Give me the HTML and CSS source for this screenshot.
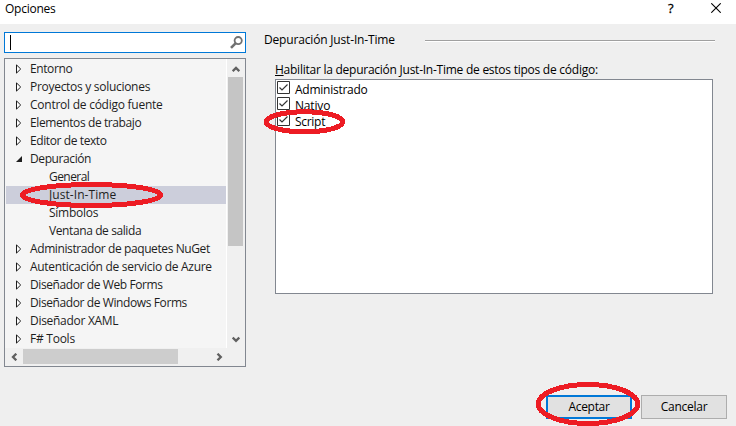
FILE: index.html
```html
<!DOCTYPE html>
<html lang="es">
<head>
<meta charset="utf-8">
<title>Opciones</title>
<link rel="stylesheet" href="styles.css">
</head>
<body>
<svg width="0" height="0" class="defs"><defs>
  <symbol id="closed" viewBox="0 0 6 10"><path d="M.5 .9V9.1L4.7 5Z" fill="#fff" stroke="#1e1e1e"/></symbol>
  <symbol id="open" viewBox="0 0 6 10"><path d="M6 2V8H0Z" fill="#1e1e1e"/></symbol>
</defs></svg>
<div class="dialog">
  <header class="titlebar">
    <span class="title s25">Opciones</span>
    <span class="help">?</span>
    <svg class="close" width="10" height="10" viewBox="0 0 10 10"><path d="M.3 .3 9.7 9.7M9.7 .3 .3 9.7" stroke="#000" stroke-width="1.1"/></svg>
  </header>
  <div class="content">
    <aside class="side">
      <div class="search">
        <i class="caret"></i>
        <svg width="13" height="13" viewBox="0 0 13 13" fill="none" stroke="#717171"><circle cx="8.2" cy="4.6" r="3.6" stroke-width="1.8"/><path d="M5.5 7.3 1 11.8" stroke-width="2.6"/></svg>
      </div>
      <div class="tree">
        <ul class="nodes">
          <li class="node"><svg class="arrow"><use href="#closed"/></svg><span class="s40">Entorno</span></li>
          <li class="node"><svg class="arrow"><use href="#closed"/></svg><span class="s30">Proyectos y soluciones</span></li>
          <li class="node"><svg class="arrow"><use href="#closed"/></svg><span class="s25">Control de código fuente</span></li>
          <li class="node"><svg class="arrow"><use href="#closed"/></svg><span class="s40">Elementos de trabajo</span></li>
          <li class="node"><svg class="arrow"><use href="#closed"/></svg><span class="s40">Editor de texto</span></li>
          <li class="node"><svg class="arrow"><use href="#open"/></svg><span class="s40">Depuración</span></li>
          <li class="node leaf"><span class="s55">General</span></li>
          <li class="node leaf selected"><span class="wide">Just-In-Time</span></li>
          <li class="node leaf"><span class="s25">Símbolos</span></li>
          <li class="node leaf"><span class="s40">Ventana de salida</span></li>
          <li class="node"><svg class="arrow"><use href="#closed"/></svg><span class="s40">Administrador de paquetes NuGet</span></li>
          <li class="node"><svg class="arrow"><use href="#closed"/></svg><span class="s30">Autenticación de servicio de Azure</span></li>
          <li class="node"><svg class="arrow"><use href="#closed"/></svg><span class="s40">Diseñador de Web Forms</span></li>
          <li class="node"><svg class="arrow"><use href="#closed"/></svg><span class="s40">Diseñador de Windows Forms</span></li>
          <li class="node"><svg class="arrow"><use href="#closed"/></svg><span class="s30">Diseñador XAML</span></li>
          <li class="node"><svg class="arrow"><use href="#closed"/></svg><span class="s25">F# Tools</span></li>
        </ul>
        <div class="vscroll">
          <svg class="up" width="8" height="7" viewBox="0 0 8 7"><path d="M.7 5.2 4 1.9 7.3 5.2"/></svg>
          <div class="vthumb"></div>
          <svg class="down" width="8" height="7" viewBox="0 0 8 7"><path d="M.7 1.5 4 4.8 7.3 1.5"/></svg>
        </div>
        <div class="hscroll">
          <svg class="left" width="7" height="8" viewBox="0 0 7 8"><path d="M5.3 .7 2 4 5.3 7.3"/></svg>
          <div class="hthumb"></div>
          <svg class="right" width="7" height="8" viewBox="0 0 7 8"><path d="M1.5 .7 4.8 4 1.5 7.3"/></svg>
        </div>
      </div>
    </aside>
    <main class="panel">
      <div class="heading"><span class="s17">Depuración Just-In-Time</span><i class="rule"></i></div>
      <div class="label"><span class="s25"><u>H</u>abilitar la depuración Just-In-Time de estos tipos de código:</span></div>
      <div class="list">
        <div class="check"><svg width="13" height="13" viewBox="0 0 13 13"><path class="box" d="M.5 .5h12v12H.5z"/><path class="tick" d="M2.5 6.5 5 9 10.5 3.5"/></svg><span class="s25">Administrado</span></div>
        <div class="check"><svg width="13" height="13" viewBox="0 0 13 13"><path class="box" d="M.5 .5h12v12H.5z"/><path class="tick" d="M2.5 6.5 5 9 10.5 3.5"/></svg><span class="s17">Nativo</span></div>
        <div class="check"><svg width="13" height="13" viewBox="0 0 13 13"><path class="box" d="M.5 .5h12v12H.5z"/><path class="tick" d="M2.5 6.5 5 9 10.5 3.5"/></svg><span class="s30">Script</span></div>
      </div>
      <div class="buttons">
        <button class="btn primary"><span class="s30">Aceptar</span></button>
        <button class="btn"><span class="s25">Cancelar</span></button>
      </div>
    </main>
  </div>
  <svg class="marks" width="736" height="426" viewBox="0 0 736 426" shape-rendering="crispEdges">
    <ellipse cx="91.5" cy="195" rx="69" ry="10.5"/>
    <ellipse cx="304.5" cy="121.8" rx="38.3" ry="10"/>
    <ellipse cx="588" cy="404" rx="49.7" ry="19.5"/>
  </svg>
</div>
</body>
</html>
```
FILE: styles.css
```css
* { box-sizing: border-box; }
body { margin: 0; font: 12px/18px "Open Sans", "Noto Sans", sans-serif; color: #1e1e1e; }
svg { display: block; flex: none; }
span { white-space: nowrap; }
.defs { position: absolute; }
.s17 { letter-spacing: -.17px; }
.s25 { letter-spacing: -.25px; }
.s30 { letter-spacing: -.29px; }
.s40 { letter-spacing: -.4px; }
.s55 { letter-spacing: -.55px; }
.wide { letter-spacing: .06px; }
.dialog { position: relative; width: 736px; height: 426px; overflow: hidden; background: #efefef; display: flex; flex-direction: column; }
.titlebar { height: 24px; background: #fff; display: flex; align-items: flex-start; padding-left: 5px; color: #000; }
.title { flex: 1; }
.help { font-size: 13px; font-weight: 500; -webkit-text-stroke: .3px #000; line-height: 17px; width: 6px; margin-right: 37px; }
.close { margin: 3px 15px 0 0; }
.content { flex: 1; display: flex; padding: 8px 9px 0 4px; }
.side { width: 242px; margin-right: 18px; }
.search { height: 21px; border: 1px solid #0078d7; background: #fff; display: flex; align-items: center; justify-content: space-between; padding: 0 2px 0 5px; }
.caret { width: 1px; height: 15px; background: #000; }
.tree { margin-top: 5px; height: 309px; border: 1px solid #828790; background: #f5f5f5; display: grid; grid-template: 289px 18px / 222px 18px; }
.nodes { list-style: none; margin: 0; padding: 1px 0 0 1px; border-right: 1px solid #fff; border-bottom: 1px solid #fff; height: 290px; }
.node { height: 18px; padding-left: 10px; display: flex; align-items: center; }
.node.leaf { padding-left: 43px; }
.selected { background: #cccedb; }
.arrow { width: 6px; height: 10px; margin-right: 8px; }
.vscroll, .hscroll { background: #f0f0f0; display: flex; }
.vscroll svg, .hscroll svg { fill: none; stroke: #606060; stroke-width: 2.3; }
.vscroll { flex-direction: column; padding: 7px 2px 0 1px; height: 290px; }
.up, .down { margin-left: 4px; }
.vthumb { height: 169px; margin-top: 4px; background: #c5c5c5; }
.down { margin-top: 90px; }
.hscroll { grid-column: 1 / 3; padding: 1px 0 2px 6px; }
.hthumb { width: 155px; margin-left: 5px; background: #cdcdcd; }
.left, .right { margin-top: 4px; }
.right { margin-left: 38px; }
.panel { flex: 1; display: flex; flex-direction: column; color: #000; }
.heading { height: 18px; display: flex; margin-top: -1px; }
.rule { width: 290px; height: 2px; margin: 9px 12px 0 auto; background: #a0a0a0; border-bottom: 1px solid #fff; }
.label { height: 18px; margin: 12px 0 0 11px; }
.label u { text-underline-offset: 1px; }
.list { margin: 0 14px 0 11px; height: 215px; border: 1px solid #828790; background: #fff; padding: 1px; }
.check { height: 16px; display: flex; gap: 5px; line-height: 17px; }
.box { fill: #fff; stroke: #333; }
.tick { fill: none; stroke: #333; stroke-width: 1.2; }
.buttons { display: flex; justify-content: flex-end; gap: 9px; margin-top: 101px; }
.btn { width: 86px; height: 24px; padding: 0; border: 1px solid #adadad; background: #e1e1e1; font: inherit; color: #000; line-height: 20px; }
.primary { border: 2px solid #0078d7; }
.marks { position: absolute; left: 0; top: 0; fill: none; stroke: #ed1c24; stroke-width: 5; }
```
